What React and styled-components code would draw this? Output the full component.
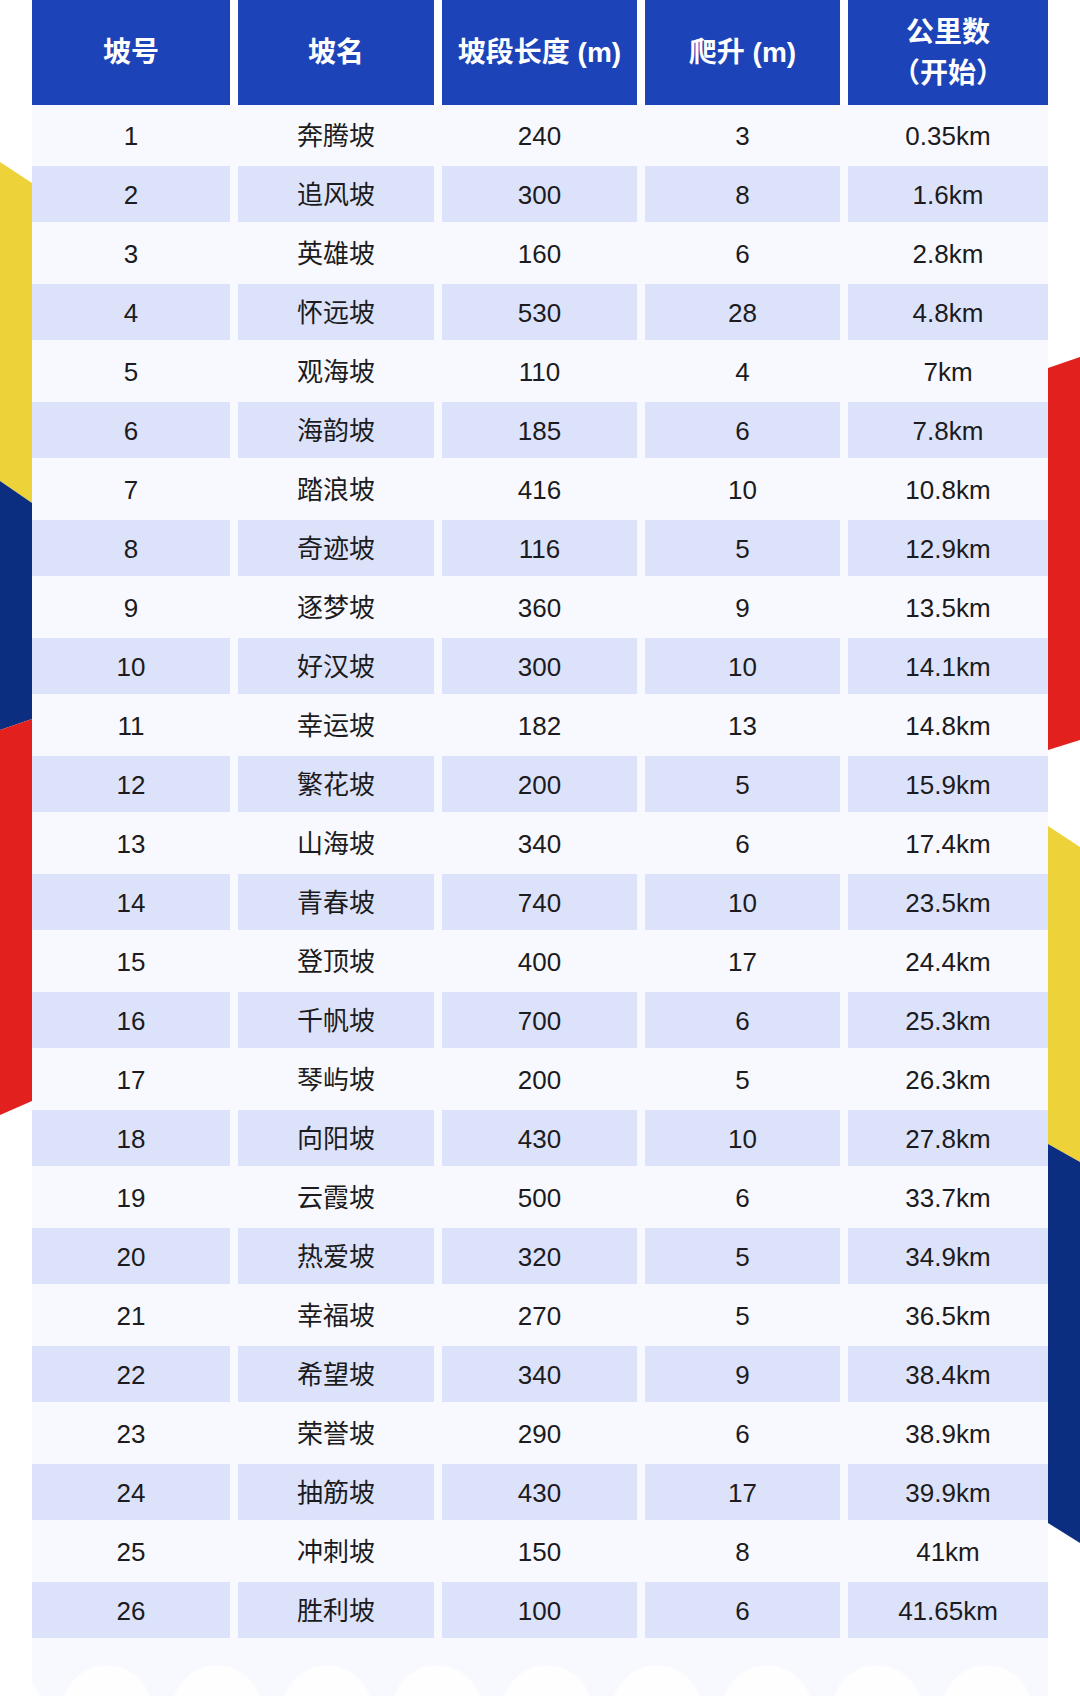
import styled, { createGlobalStyle } from "styled-components";

const GlobalStyle = createGlobalStyle`
  html, body {
    margin: 0;
    padding: 0;
    background: #ffffff;
  }
  body {
    font-family: "Liberation Sans", "Noto Sans CJK SC", sans-serif;
  }
`

const rows = [
  [1, "奔腾坡", 240, 3, "0.35km"],
  [2, "追风坡", 300, 8, "1.6km"],
  [3, "英雄坡", 160, 6, "2.8km"],
  [4, "怀远坡", 530, 28, "4.8km"],
  [5, "观海坡", 110, 4, "7km"],
  [6, "海韵坡", 185, 6, "7.8km"],
  [7, "踏浪坡", 416, 10, "10.8km"],
  [8, "奇迹坡", 116, 5, "12.9km"],
  [9, "逐梦坡", 360, 9, "13.5km"],
  [10, "好汉坡", 300, 10, "14.1km"],
  [11, "幸运坡", 182, 13, "14.8km"],
  [12, "繁花坡", 200, 5, "15.9km"],
  [13, "山海坡", 340, 6, "17.4km"],
  [14, "青春坡", 740, 10, "23.5km"],
  [15, "登顶坡", 400, 17, "24.4km"],
  [16, "千帆坡", 700, 6, "25.3km"],
  [17, "琴屿坡", 200, 5, "26.3km"],
  [18, "向阳坡", 430, 10, "27.8km"],
  [19, "云霞坡", 500, 6, "33.7km"],
  [20, "热爱坡", 320, 5, "34.9km"],
  [21, "幸福坡", 270, 5, "36.5km"],
  [22, "希望坡", 340, 9, "38.4km"],
  [23, "荣誉坡", 290, 6, "38.9km"],
  [24, "抽筋坡", 430, 17, "39.9km"],
  [25, "冲刺坡", 150, 8, "41km"],
  [26, "胜利坡", 100, 6, "41.65km"],
];

const Page = styled.div`
  display: flex;
  width: 1080px;
  height: 1696px;
  overflow: hidden;
`

const Strip = styled.svg`
  flex: 0 0 32px;
  width: 32px;
  height: 1696px;
  display: block;
`

const Table = styled.div`
  flex: 0 0 1016px;
  display: flex;
  flex-direction: column;
  background: #f8f9fe;
`

const Grid = styled.div`
  display: grid;
  grid-template-columns: 198px 196px 195px 195px 200px;
  column-gap: 8px;
`

const HeadRow = styled(Grid)`
  height: 105px;
  background: #ffffff;
`

const HeadCell = styled.div`
  background: #1d43b8;
  color: #ffffff;
  font-size: 28px;
  font-weight: bold;
  line-height: 41px;
  display: flex;
  flex-direction: column;
  align-items: center;
  justify-content: center;
  text-align: center;
`

const Row = styled(Grid)`
  height: 59px;
  padding: 1.5px 0;
  box-sizing: border-box;
`

const Cell = styled.div`
  background: ${p => (p.$shade ? "#dde2fb" : "transparent")};
  color: #1b1b20;
  font-size: 26px;
  display: flex;
  align-items: center;
  justify-content: center;
  padding: ${p => (p.$cjk ? "0 0 2px" : "4px 0 0")};
  box-sizing: border-box;
`

const Footer = styled.div`
  flex: 1;
  background:
    radial-gradient(circle at 50% 140%, #fefeff 0 44px, transparent 46px) 20px 100% / 110px 36px repeat-x,
    #f8f9fe;
`

function LeftStrip() {
  return (
    <Strip viewBox="0 0 32 1696" preserveAspectRatio="none">
      <polygon points="0,162 32,183 32,503 0,481" fill="#eed23a" />
      <polygon points="0,481 32,503 32,719 0,730" fill="#0b2e80" />
      <polygon points="0,730 32,719 32,1101 0,1115" fill="#e2201e" />
    </Strip>
  )
}

function RightStrip() {
  return (
    <Strip viewBox="0 0 32 1696" preserveAspectRatio="none">
      <polygon points="0,368 32,357 32,740 0,750" fill="#e2201e" />
      <polygon points="0,826 32,847 32,1162 0,1144" fill="#eed23a" />
      <polygon points="0,1144 32,1162 32,1543 0,1523" fill="#0b2e80" />
    </Strip>
  )
}

export default function App() {
  return (
    <>
      <GlobalStyle />
      <Page>
        <LeftStrip />
        <Table>
          <HeadRow>
            <HeadCell>坡号</HeadCell>
            <HeadCell>坡名</HeadCell>
            <HeadCell>坡段长度 (m)</HeadCell>
            <HeadCell>爬升 (m)</HeadCell>
            <HeadCell>
              <span>公里数</span>
              <span>（开始）</span>
            </HeadCell>
          </HeadRow>
          {rows.map((r, i) => (
            <Row key={r[0]}>
              {r.map((v, j) => (
                <Cell key={j} $shade={i % 2 === 1} $cjk={j === 1}>{v}</Cell>
              ))}
            </Row>
          ))}
          <Footer />
        </Table>
        <RightStrip />
      </Page>
    </>
  );
}
